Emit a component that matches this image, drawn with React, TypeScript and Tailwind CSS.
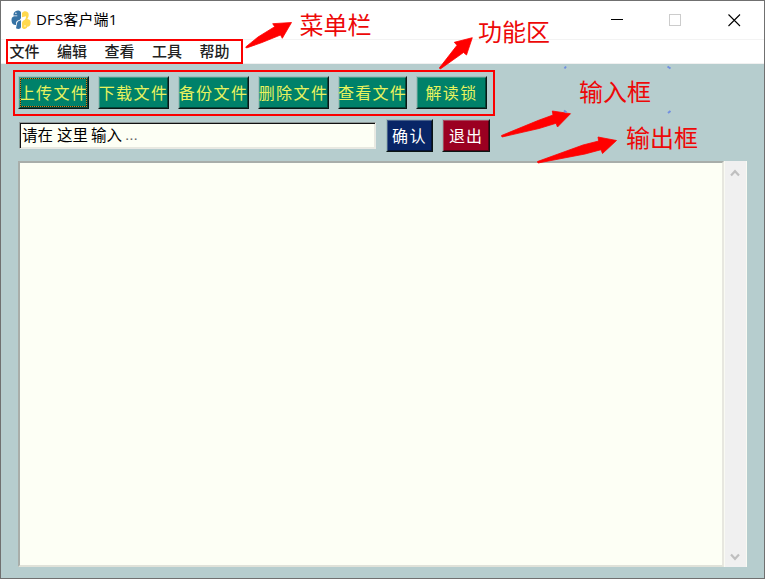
import React from "react";

type ToolButton = { label: string; size: string; focused?: boolean };

const menus = ["文件", "编辑", "查看", "工具", "帮助"];

const tools: ToolButton[] = [
  { label: "上传文件", size: "w-[71px] tracking-[1.4px]", focused: true },
  { label: "下载文件", size: "w-[71px] tracking-[1.4px]" },
  { label: "备份文件", size: "w-[71px] tracking-[1.4px]" },
  { label: "删除文件", size: "w-[71px] tracking-[1.4px]" },
  { label: "查看文件", size: "w-[69px] tracking-[1.2px]" },
  { label: "解读锁", size: "w-[71px] tracking-[1.4px]" },
];

const raised =
  "flex h-[33px] shrink-0 items-center justify-center whitespace-nowrap border border-t-[#a3bfbc] border-l-[#a3bfbc] border-r-[#0c1614] border-b-[#0c1614] shadow-[inset_1px_1px_0_rgba(190,205,205,0.35),inset_-1px_-1px_0_rgba(0,0,0,0.45)] pb-[2px] text-[16px] leading-none";

function PythonLogo() {
  return (
    <svg width="20" height="20" viewBox="0 0 20 20" className="shrink-0">
      <path
        d="M4.500 1.200C6.500 .2 9.300 .4 10 2.600V7.400c0 1.600-1 2.300-2.500 2.900C5.700 11 5 12 5 13.500v1.500c-2.200.2-3.800-.9-4.300-3.200C.1 9 .9 6.700 3 6.300h3.300V5.500H2.500C2.300 3.500 3 1.900 4.500 1.200Z"
        fill="#3672a4"
      />
      <path d="M6 13.200c.4-1.700 1.800-2.200 4-2.900v6.500c0 2.200-3 2.900-5 1.500Z" fill="#3672a4" />
      <path
        d="M11 3c1.500-2.700 6-2.500 6.600.8.300 2-.1 3.700-1.300 5.200 2.500.2 3.400 1.900 3.300 4.100-.1 2.400-1.100 3.700-3.300 3.700-.5 2.500-4.200 3-5.300.7v-4.300c0-1.800 1-2.500 2.500-3.300C14.600 9.200 15 8 15 6.200l-4 1Z"
        fill="#ffd94d"
      />
      <circle cx="4.900" cy="3.300" r=".7" fill="#fff" />
      <circle cx="14" cy="16" r=".7" fill="#fff" />
    </svg>
  );
}

function Annotations() {
  const label =
    "absolute whitespace-nowrap text-[24px] leading-[28px] font-normal text-[#ed0808]";
  return (
    <div className="pointer-events-none absolute inset-0">
      <div className="absolute left-[6px] top-[39px] h-[25px] w-[237px] border-2 border-[#fb0000]" />
      <div className="absolute left-[13px] top-[70px] h-[46px] w-[482px] border-2 border-[#fb0000]" />
      <svg className="absolute inset-0" width="765" height="579" viewBox="0 0 765 579">
        <g fill="#ff0000" stroke="#ff0000" strokeWidth=".8" strokeLinejoin="round">
          <path d="M245.700 47 L258 37 L274.700 26.700 L272.700 23.700 L291.500 22.500 L282.300 38.300 L280.500 35 L262 42.500 L246.500 48 Z" />
          <path d="M439.300 68 L457 45.300 L454.300 42.300 L472.300 37.700 L466.500 55 L463.500 52.500 L440.300 69 Z" />
          <path d="M501.500 135.500 L538 120.500 L553 115 L552.300 111 L570.500 113.700 L557.500 127 L556 123.300 L539 128.500 L502 137 Z" />
          <path d="M537.500 161.500 L583 145 L598.700 141 L598 137 L616.500 140.500 L602.500 153.500 L601 149.700 L585 154 L538 163 Z" />
        </g>
        <path
          d="M564.500 68.500L566 66.500M667.500 66.500L670.500 68.500M564 110.500L566.500 112.500M668 113L670.500 111"
          stroke="#718fe0"
          strokeWidth="2"
          fill="none"
        />
      </svg>
      <span className={`${label} left-[299.500px] top-[10px]`}>菜单栏</span>
      <span className={`${label} left-[478px] top-[17px]`}>功能区</span>
      <span className={`${label} left-[579px] top-[77px]`}>输入框</span>
      <span className={`${label} left-[626px] top-[123px]`}>输出框</span>
    </div>
  );
}

export default function App() {
  return (
    <div className="relative flex h-[579px] w-[765px] flex-col overflow-hidden border border-[#707070] bg-[#b6cdce] font-['Noto_Sans_CJK_SC',sans-serif]">
      <header className="flex h-[38px] shrink-0 items-center bg-white pl-[10px] text-black">
        <PythonLogo />
        <h1 className="mb-[2px] ml-[5px] text-[15px] font-normal leading-none">
          <span className="font-['Open_Sans','Noto_Sans_CJK_SC',sans-serif] tracking-[0.15px]">DFS客户端1</span>
        </h1>
        <svg className="ml-auto mr-[22px]" width="132" height="14" viewBox="0 0 132 14" fill="none">
          <path d="M1 6.500H13" stroke="#000" />
          <rect x="59.500" y="1.500" width="11" height="11" stroke="#ccc" />
          <path d="M118.500 1.500L130 13M130 1.500L118.500 13" stroke="#000" strokeWidth="1.100" />
        </svg>
      </header>
      <nav className="flex h-[25px] shrink-0 items-center gap-[17.500px] border-t border-b border-t-[#f3f3f3] border-b-[#f0f0f0] bg-white pb-[3px] pl-[8.500px] text-[15px] font-medium leading-none text-[#222]">
        {menus.map((m) => (
          <span key={m} className="w-[30px] whitespace-nowrap">{m}</span>
        ))}
      </nav>
      <main className="flex min-h-0 flex-1 flex-col pl-[17px] pr-[17px] pb-[11px] pt-[12px]">
        <div className="flex shrink-0 gap-[9px]">
          {tools.map((t) => (
            <button key={t.label} className={`${raised} ${t.size} relative bg-[#00816a] text-[#e9f35e]`}>
              {t.label}
              {t.focused && (
                <>
                  <span className="absolute inset-px border border-[#16382a]" />
                  <span className="absolute inset-px border border-dotted border-[#d08a1c]" />
                </>
              )}
            </button>
          ))}
        </div>
        <div className="mt-[10px] flex shrink-0 items-center">
          <div className="ml-px flex h-[27px] w-[357px] items-center whitespace-nowrap border border-t-[#8f9998] border-l-[#8f9998] border-r-[#e8e9e4] border-b-[#e8e9e4] bg-[#fdfff5] pb-px pl-[2px] text-[15.500px] leading-none text-black shadow-[inset_1px_1px_0_#111,inset_-1px_-1px_0_#e8e9e0]">
            <span className="w-[31px]">请在</span>
            <span className="ml-[4px] w-[31px]">这里</span>
            <span className="ml-[3px] w-[31px]">输入</span>
            <span className="ml-[3px] font-['Liberation_Sans'] text-[#666]">...</span>
          </div>
          <button className={`${raised} ml-[10px] w-[47px] bg-[#082567] tracking-[1.500px] text-white`}>确认</button>
          <button className={`${raised} ml-[9px] w-[48px] bg-[#9b0021] tracking-[1px] text-white`}>退出</button>
        </div>
        <div className="mt-[9px] flex min-h-0 flex-1">
          <div className="flex-1 border-2 border-t-[#a8aeaa] border-l-[#a8aeaa] border-r-[#e7e7df] border-b-[#e0e2d9] bg-[#fdfff5]" />
          <div className="flex w-[23px] flex-col items-center justify-between border-x border-[#f9faf3] bg-[#f0f0f0] pb-[6px] pr-[2px] pt-[8px]">
            <svg width="10" height="8" viewBox="0 0 10 8" fill="none">
              <path d="M1 6.500L5 2.200L9 6.500" stroke="#bfbfbf" strokeWidth="2.200" />
            </svg>
            <svg width="10" height="8" viewBox="0 0 10 8" fill="none">
              <path d="M1 1.500L5 5.800L9 1.500" stroke="#bfbfbf" strokeWidth="2.200" />
            </svg>
          </div>
        </div>
      </main>
      <div className="absolute -left-px -top-px h-[579px] w-[765px]">
        <Annotations />
      </div>
    </div>
  );
}
